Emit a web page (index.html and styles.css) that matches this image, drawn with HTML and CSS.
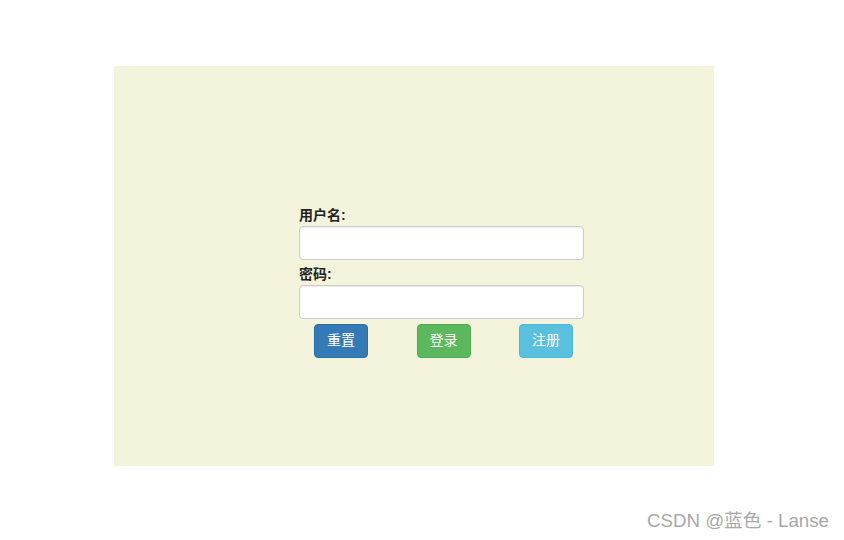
FILE: index.html
```html
<!DOCTYPE html>
<html lang="zh">
<head>
<meta charset="utf-8">
<title>登录</title>
<link rel="stylesheet" href="styles.css">
</head>
<body>
<div class="page">
  <div class="panel">
    <form class="login-form">
      <label class="field-label">用户名:</label>
      <input class="field-input" type="text">
      <label class="field-label">密码:</label>
      <input class="field-input" type="password">
      <div class="actions">
        <button type="button" class="btn btn-primary">重置</button>
        <button type="button" class="btn btn-success">登录</button>
        <button type="button" class="btn btn-info">注册</button>
      </div>
    </form>
  </div>
</div>
<div class="watermark">CSDN @蓝色 - Lanse</div>
</body>
</html>
```
FILE: styles.css
```css
html, body {
  margin: 0;
  padding: 0;
  background: #fff;
  font-family: "Liberation Sans", Arial, "Noto Sans CJK SC", sans-serif;
  font-size: 14px;
  line-height: 1.42857;
  color: #333;
}
.page {
  padding-top: 66px;
  padding-left: 114px;
}
.panel {
  box-sizing: border-box;
  width: 600px;
  height: 400px;
  background: #f4f4dc;
  padding: 135px 0 0 185px;
}
.login-form {
  width: 285px;
  display: flex;
  flex-direction: column;
  margin: 0;
}
.field-label {
  font-weight: bold;
  margin-top: 5px;
  height: 20px;
  color: #222;
}
.field-input {
  box-sizing: border-box;
  height: 34px;
  width: 100%;
  margin: 0;
  padding: 6px 12px;
  border: 1px solid #ccc;
  border-radius: 4px;
  background: #fff;
  box-shadow: inset 0 1px 1px rgba(0,0,0,.075);
  font-size: 14px;
}
.actions {
  display: flex;
  gap: 48.5px;
  padding-left: 15px;
  margin-top: 5px;
}
.btn {
  box-sizing: border-box;
  height: 34px;
  width: 54px;
  padding: 6px 12px;
  border: 1px solid transparent;
  border-radius: 4px;
  color: #fff;
  font-family: "Liberation Sans", Arial, "Noto Sans CJK SC", sans-serif;
  font-size: 14px;
  line-height: 1.42857;
  cursor: pointer;
}
.btn-primary { background: #337ab7; border-color: #2e6da4; }
.btn-success { background: #5cb85c; border-color: #4cae4c; }
.btn-info { background: #5bc0de; border-color: #46b8da; }
.watermark {
  position: absolute;
  right: 15px;
  top: 509px;
  font-size: 18.7px;
  color: #a8a8a8;
  font-family: "Liberation Sans", Arial, "Noto Sans CJK SC", sans-serif;
  line-height: 24px;
}
```
